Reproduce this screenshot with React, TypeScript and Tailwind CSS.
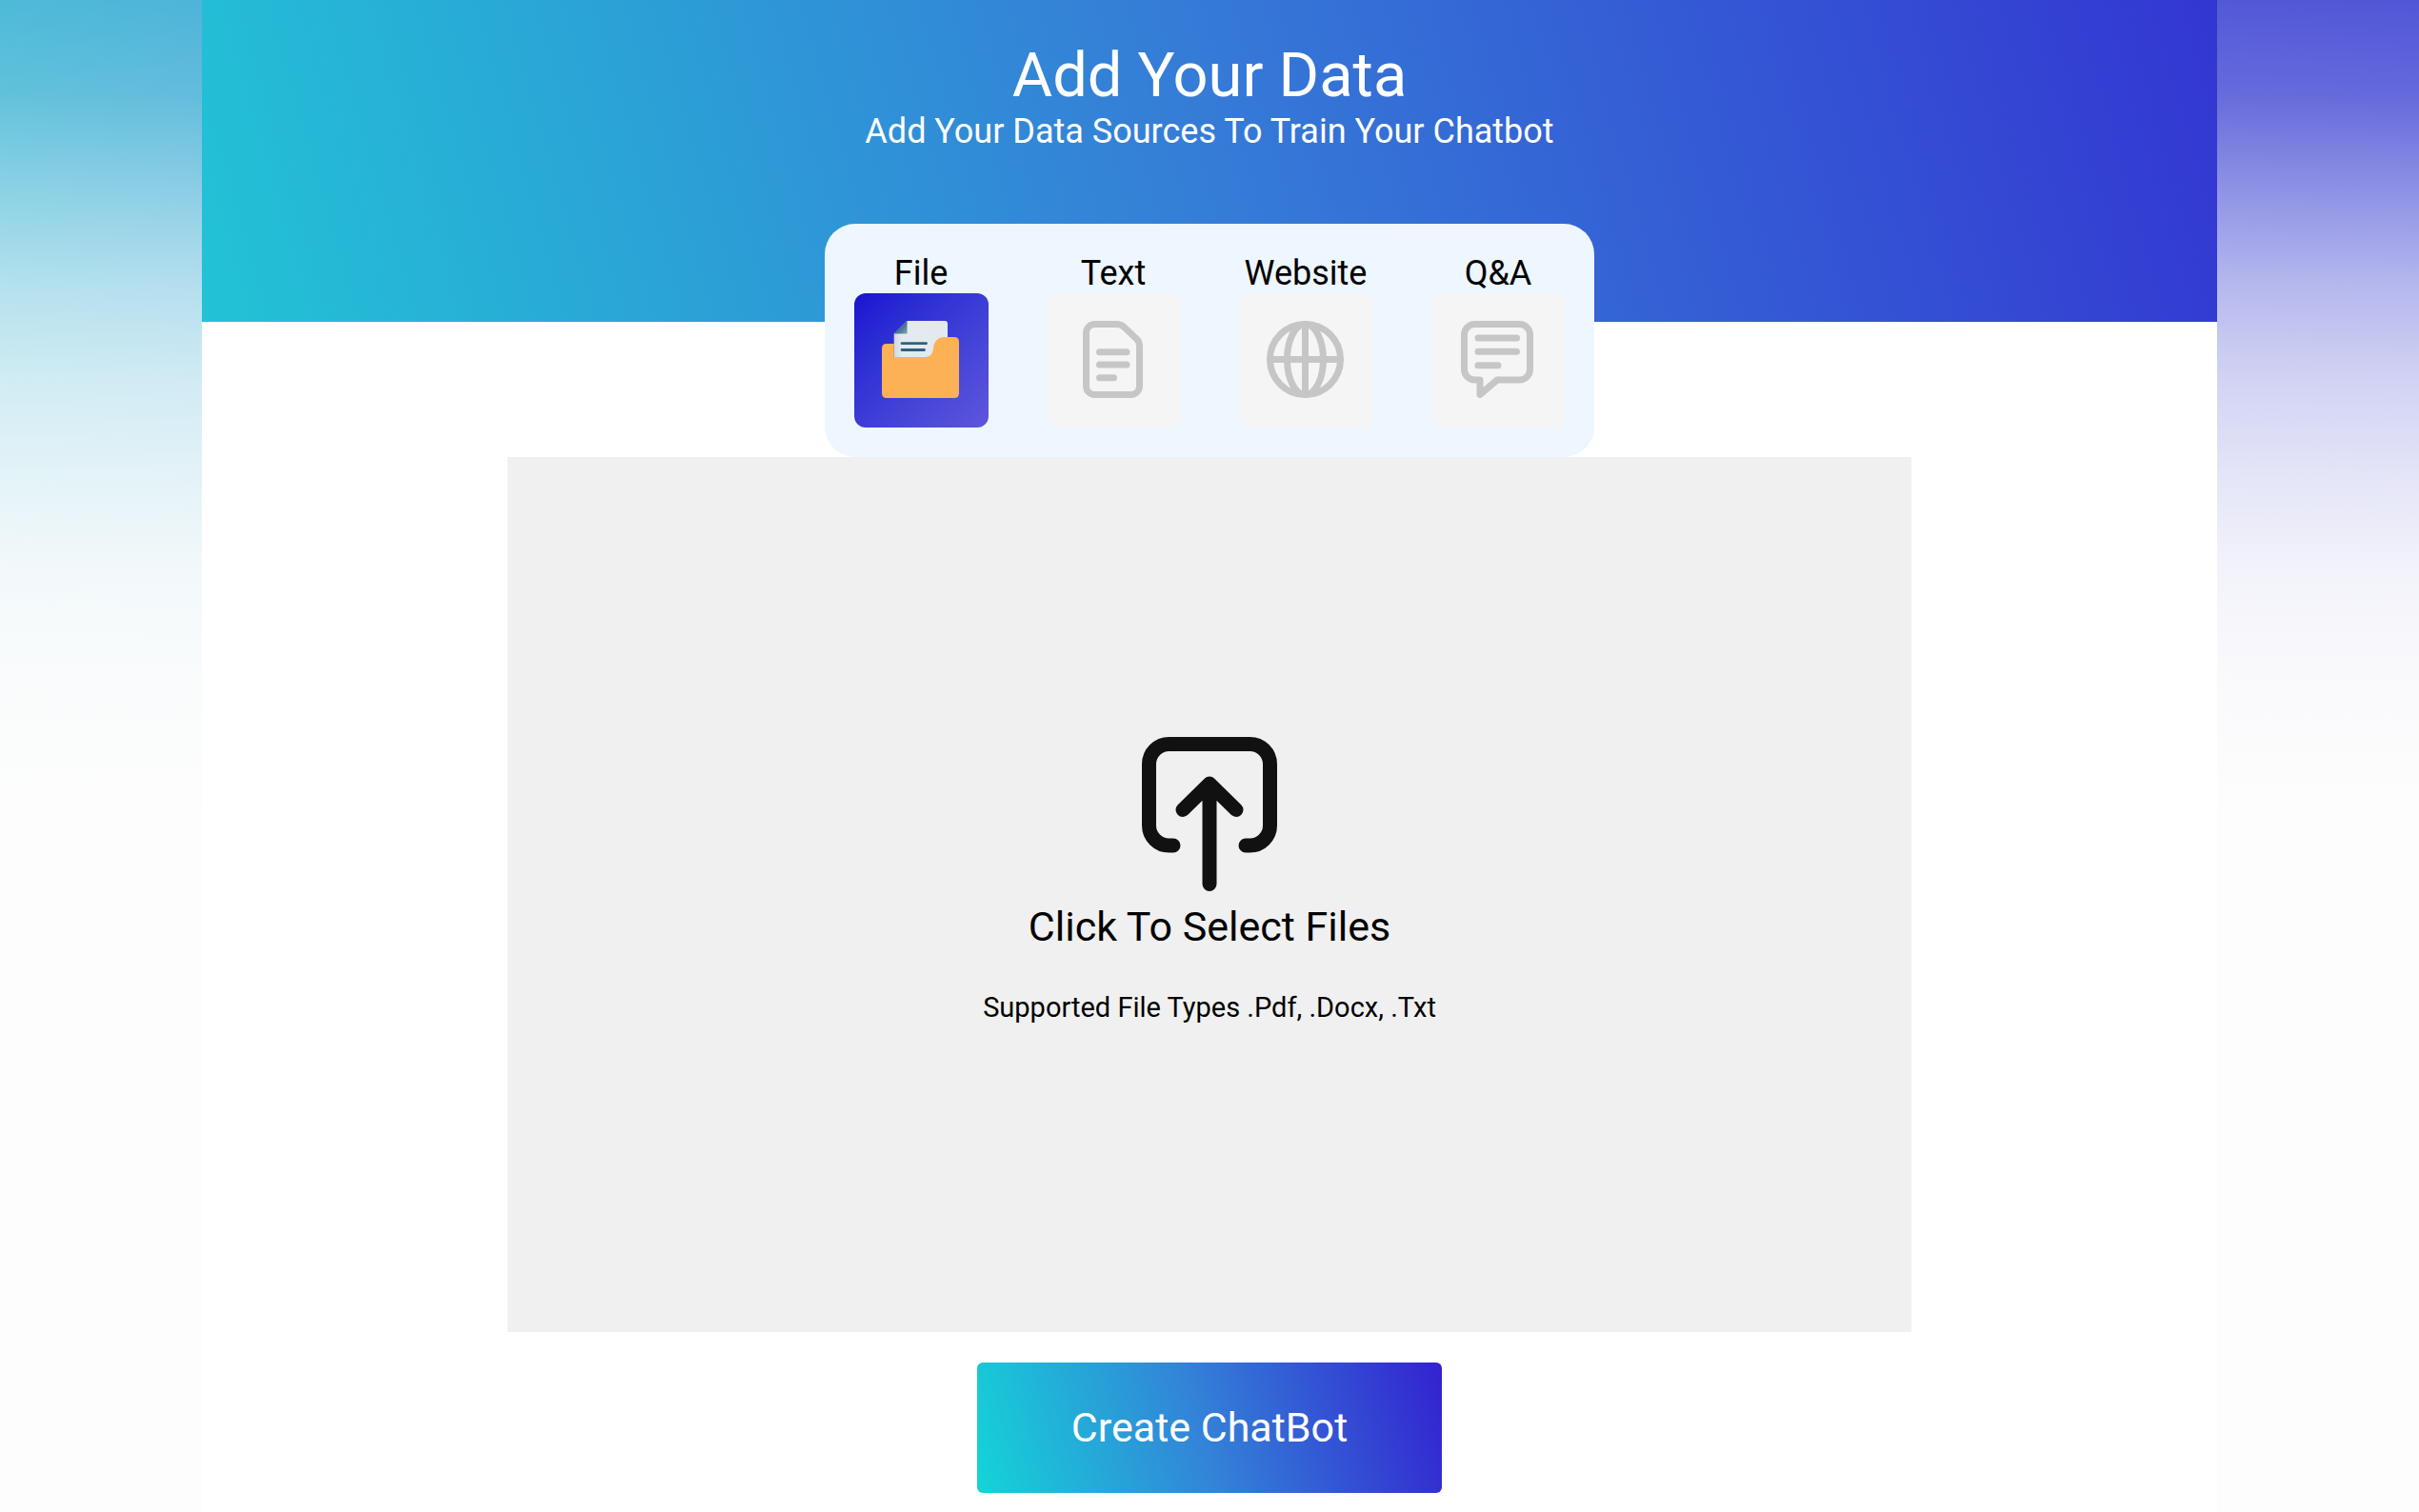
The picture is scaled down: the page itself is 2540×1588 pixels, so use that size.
import React, { useState } from 'react';
import clsx from 'clsx';

const FileIcon = () => (
  <svg viewBox="0 0 81 81" className="w-[81px] h-[81px]" aria-hidden="true">
    <defs>
      <linearGradient id="fold" x1="0" y1="0" x2="1" y2="1">
        <stop offset="0.4" stopColor="#2f6480" />
        <stop offset="1" stopColor="#7fa3b3" />
      </linearGradient>
      <linearGradient id="paper" x1="0" y1="0" x2="1" y2="0">
        <stop offset="0" stopColor="#cfd6df" />
        <stop offset="0.15" stopColor="#e4eaf0" />
        <stop offset="1" stopColor="#e2e9ef" />
      </linearGradient>
    </defs>
    <path d="M12.7 13.5 26.5 0H66q3 0 3 3v38H12.7z" fill="url(#paper)" />
    <path d="M12.7 13.5 26.5 0V13.5z" fill="url(#fold)" />
    <path
      d="M0 29q0-5 5-5h7.7v14H45c6 0 8.500-4 9-9 .8-7 4-12 12-12h10q5 0 5 5v54q0 5-5 5H5q-5 0-5-5z"
      fill="#fdb155"
    />
    <path d="M21 23.700h25.500M21 30.500h23.500" stroke="#31607c" strokeWidth="2.800" strokeLinecap="round" />
  </svg>
);

const TextIcon = () => (
  <svg
    viewBox="0 0 63 81"
    className="w-[63px] h-[81px]"
    fill="none"
    stroke="#c6c6c6"
    strokeWidth="7"
    strokeLinecap="round"
    strokeLinejoin="round"
    aria-hidden="true"
  >
    <path d="M12.500 3.500H36q4 0 7 2.800L56.500 19q3 3 3 7v42.500a9 9 0 0 1-9 9h-38a9 9 0 0 1-9-9v-56a9 9 0 0 1 9-9z" />
    <path d="M17.500 32.700h28.500M17.500 46h28.500M17.500 59.700h15" />
  </svg>
);

const WebsiteIcon = () => (
  <svg
    viewBox="0 0 81 81"
    className="w-[81px] h-[81px]"
    fill="none"
    stroke="#c6c6c6"
    strokeWidth="7"
    aria-hidden="true"
  >
    <circle cx="40.500" cy="40.500" r="37" />
    <ellipse cx="40.500" cy="40.500" rx="19" ry="37" />
    <path d="M40.500 3.500v74M3.500 40.500h74" />
  </svg>
);

const ChatIcon = () => (
  <svg
    viewBox="0 0 76 81"
    className="w-[76px] h-[81px]"
    fill="none"
    stroke="#c6c6c6"
    strokeWidth="7"
    strokeLinecap="round"
    strokeLinejoin="round"
    aria-hidden="true"
  >
    <path d="M14.500 3.500h47a11 11 0 0 1 11 11v36.500a11 11 0 0 1-11 11H38L20 77.500V62h-5.500a11 11 0 0 1-11-11V14.500a11 11 0 0 1 11-11z" />
    <path d="M18 18h40.500M18 32.300h40.500M18 46.700h21" />
  </svg>
);

const UploadIcon = () => (
  <svg
    viewBox="0 0 142 162"
    className="w-[142px] h-[162px]"
    fill="none"
    stroke="#111111"
    strokeWidth="15"
    strokeLinecap="round"
    strokeLinejoin="round"
    aria-hidden="true"
  >
    <path d="M33 114h-4.500a21 21 0 0 1-21-21V28.500a21 21 0 0 1 21-21h85a21 21 0 0 1 21 21V93a21 21 0 0 1-21 21H109" />
    <path d="M71 154.500V49M43 76.500 71 49l28 27.500" />
  </svg>
);

const sources = [
  { name: 'File', Icon: FileIcon },
  { name: 'Text', Icon: TextIcon },
  { name: 'Website', Icon: WebsiteIcon },
  { name: 'Q&A', Icon: ChatIcon },
];

const App = () => {
  const [active, setActive] = useState('File');

  return (
    <div className="min-h-screen font-[Roboto,sans-serif] text-black bg-[#fdfdfd] bg-[linear-gradient(180deg,rgba(253,253,253,0.16)_0px,rgba(253,253,253,0.26)_100px,rgba(253,253,253,0.46)_200px,rgba(253,253,253,0.65)_300px,rgba(253,253,253,0.79)_400px,rgba(253,253,253,0.88)_500px,rgba(253,253,253,0.95)_600px,rgba(253,253,253,0.98)_700px,#fdfdfd_850px),linear-gradient(90deg,#2badd0_0%,#2da5d2_9%,#3139d0_92%,#2f36d0_100%)]">
      <main className="w-10/12 min-h-screen mx-auto bg-white flex flex-col items-center">
        <header className="w-full pt-[42px] pb-[179px] text-center text-white bg-[linear-gradient(74deg,#22c3d6,#357cd7_50%,#3336d2)]">
          <h1 className="text-[65px] leading-[75px]">Add Your Data</h1>
          <p className="text-[36px] leading-[42px]">Add Your Data Sources To Train Your Chatbot</p>
        </header>

        <div role="tablist" aria-label="Data sources" className="-mt-[103px] flex rounded-[32px] bg-[#eef6ff] py-[31px]">
          {sources.map(({ name, Icon }) => (
            <button
              key={name}
              type="button"
              role="tab"
              aria-selected={active === name}
              onClick={() => setActive(name)}
              className="w-[202px] flex flex-col items-center cursor-pointer"
            >
              <span className="text-[36px] leading-[42px]">{name}</span>
              <span
                className={clsx(
                  'w-[141px] h-[141px] pr-0.5 pb-0.5 rounded-xl flex items-center justify-center',
                  active === name ? 'bg-linear-to-br from-[#1a10d0] to-[#5f56db]' : 'bg-[#f5f5f5]'
                )}
              >
                <Icon />
              </span>
            </button>
          ))}
        </div>

        <label className="relative w-full max-w-[1474px] pt-[294px] pb-[323px] bg-[#f0f0f0] flex flex-col items-center cursor-pointer">
          <input type="file" accept=".pdf,.docx,.txt" multiple className="sr-only" />
          <UploadIcon />
          <span className="mt-3 text-[43px] leading-[50px]">Click To Select Files</span>
          <span className="mt-[42px] text-[29px] leading-9">Supported File Types .Pdf, .Docx, .Txt</span>
        </label>

        <button
          type="button"
          className="mt-8 mb-5 px-[99px] py-11 rounded-md text-[43px] leading-[49px] text-white cursor-pointer bg-[linear-gradient(74deg,#14d4d8,#3383d8_48%,#3322d0)]"
        >
          Create ChatBot
        </button>
      </main>
    </div>
  );
};

export default App;
